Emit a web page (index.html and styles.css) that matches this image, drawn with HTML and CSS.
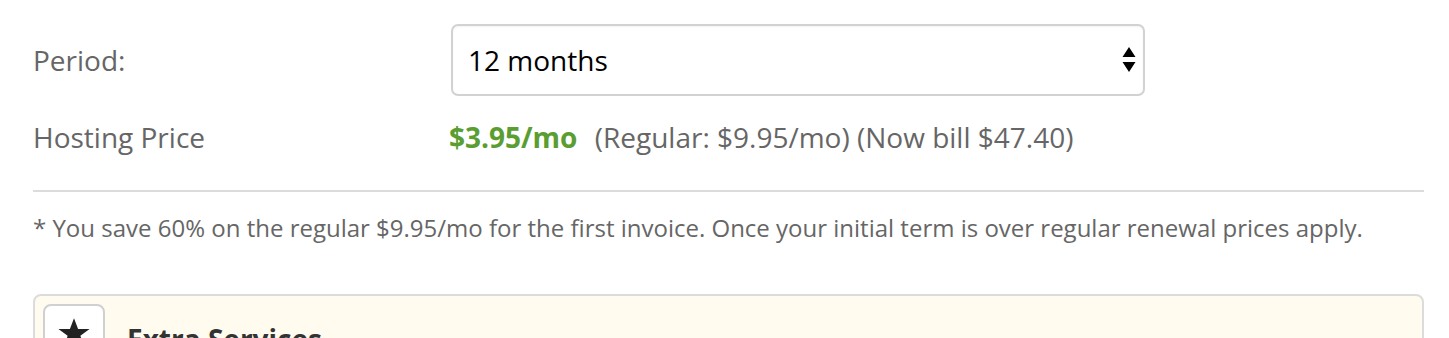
FILE: index.html
```html
<!DOCTYPE html>
<html>
<head>
<meta charset="utf-8">
<link rel="stylesheet" href="styles.css">
</head>
<body>
<div class="page">
  <div class="row row-period">
    <div class="label">Period:</div>
    <div class="field">
      <div class="select-wrap">
        <select class="select">
          <option>12 months</option>
        </select>
        <svg class="arrows" width="14" height="26" viewBox="0 0 14 26"><path d="M7 0 L13.5 10 H0.5 Z M7 25 L13.5 15 H0.5 Z" fill="#000"/></svg>
      </div>
    </div>
  </div>
  <div class="row row-price">
    <div class="label">Hosting Price</div>
    <div class="field price">
      <span class="now">$3.95/mo</span>
      <span class="regular">(Regular: $9.95/mo) (Now bill $47.40)</span>
    </div>
  </div>
  <div class="divider"></div>
  <p class="note">* You save 60% on the regular $9.95/mo for the first invoice. Once your initial term is over regular renewal prices apply.</p>
  <div class="extras">
    <div class="icon-box">
      <svg width="34" height="34" viewBox="0 0 24 24"><path d="M12 1.5 L14.9 9.2 H23 L16.5 14 L19 22 L12 17.2 L5 22 L7.5 14 L1 9.2 H9.1 Z" fill="#222"/></svg>
    </div>
    <div class="extras-title">Extra Services</div>
  </div>
</div>
</body>
</html>
```

FILE: styles.css
```css
html, body {
  margin: 0;
  padding: 0;
  background: #fff;
  overflow: hidden;
}
body {
  font-family: "Open Sans", "Liberation Sans", sans-serif;
  color: #666;
}
.page {
  padding: 24px 25px 0 33px;
}
.row {
  display: grid;
  grid-template-columns: 418px 694px;
  align-items: center;
}
.label {
  font-size: 28px;
  color: #666;
}
.select-wrap {
  position: relative;
  height: 72px;
}
.select {
  appearance: none;
  -webkit-appearance: none;
  width: 100%;
  height: 72px;
  box-sizing: border-box;
  border: 2px solid #d2d2d2;
  border-radius: 7px;
  background: #fff;
  font-family: "Open Sans", "Liberation Sans", sans-serif;
  font-size: 28px;
  color: #000;
  padding: 0 0 0 15px;
  box-shadow: inset 0 1px 2px rgba(0,0,0,0.05);
  outline: none;
}
.arrows {
  position: absolute;
  right: 9px;
  top: 23px;
  pointer-events: none;
}
.row-price {
  margin-top: 20px;
  height: 42px;
}
.price {
  margin-left: -2px;
  font-size: 28px;
  white-space: nowrap;
}
.now {
  color: #5a9e32;
  font-weight: 700;
  margin-right: 10px;
}
.regular {
  color: #666;
}
.divider {
  height: 2px;
  background: #dcdcdc;
  margin-top: 32px;
}
.note {
  margin: 20px 0 0;
  font-size: 24px;
  line-height: 32px;
  color: #666;
  white-space: nowrap;
}
.extras {
  margin-top: 50px;
  border: 2px solid #dcdcdc;
  border-radius: 8px;
  background: #fffbee;
  height: 80px;
  padding: 8px 0 0 8px;
  display: flex;
  align-items: flex-start;
  gap: 22px;
}
.icon-box {
  width: 62px;
  height: 62px;
  box-sizing: border-box;
  background: #fff;
  border: 2px solid #d0d0d0;
  border-radius: 8px;
  display: flex;
  justify-content: center;
  padding-top: 10px;
}
.extras-title {
  font-size: 28px;
  font-weight: 700;
  color: #333;
  margin-top: 16px;
}
```
